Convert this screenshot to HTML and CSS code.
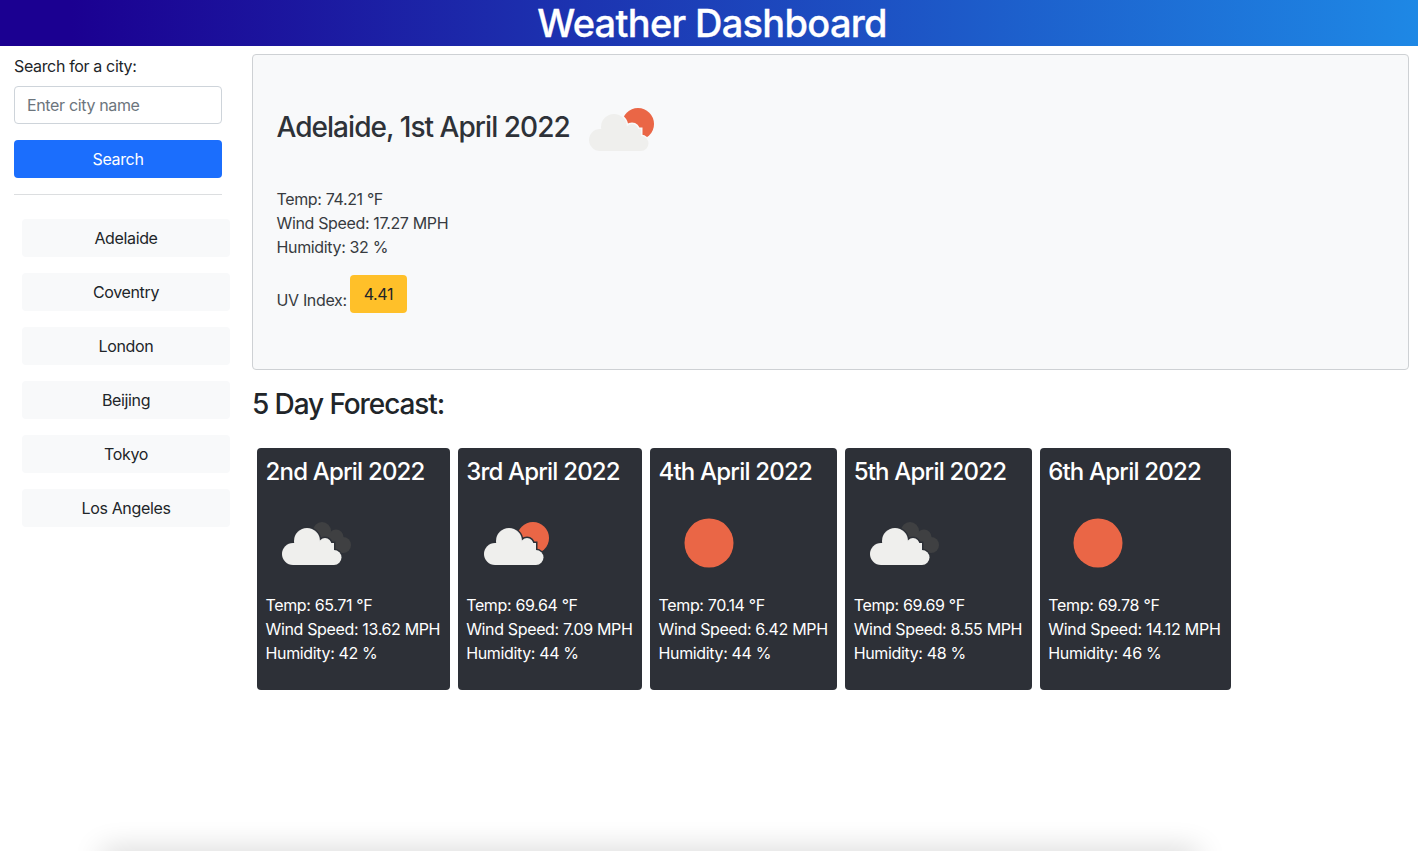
FILE: index.html
```html
<!DOCTYPE html>
<html lang="en">
<head>
<meta charset="utf-8">
<title>Weather Dashboard</title>
<link rel="stylesheet" href="styles.css">
</head>
<body>
<svg class="defs" width="0" height="0" aria-hidden="true">
  <defs>
    <g id="cloud-shape">
      <circle cx="27" cy="61" r="11"/>
      <circle cx="41" cy="48" r="13"/>
      <circle cx="59" cy="51.5" r="6.5"/>
      <circle cx="68" cy="64.5" r="7.5"/>
      <rect x="27" y="50" width="41" height="22"/>
    </g>
    <symbol id="icon-clear" viewBox="0 0 100 100">
      <circle class="sun" cx="50" cy="50" r="24.5"/>
    </symbol>
    <symbol id="icon-few" viewBox="0 0 100 100">
      <circle class="sun" cx="67" cy="45" r="16"/>
      <g class="halo" transform="translate(2 0)"><use href="#cloud-shape"/></g>
      <g class="cloud" transform="translate(2 0)"><use href="#cloud-shape"/></g>
    </symbol>
    <symbol id="icon-broken" viewBox="0 0 100 100">
      <g class="dark">
        <circle cx="56" cy="38" r="9"/>
        <circle cx="70" cy="44" r="7.5"/>
        <circle cx="77" cy="52" r="8"/>
        <rect x="56" y="40" width="20" height="20"/>
      </g>
      <g class="halo"><use href="#cloud-shape"/></g>
      <g class="cloud"><use href="#cloud-shape"/></g>
    </symbol>
  </defs>
</svg>

<header class="top">
  <h1>Weather Dashboard</h1>
</header>

<div class="layout">
  <aside class="side">
    <label class="label" for="city">Search for a city:</label>
    <input class="input" id="city" type="text" placeholder="Enter city name">
    <button class="search" type="button">Search</button>
    <hr class="rule">
    <div class="history">
      <button class="city" type="button">Adelaide</button>
      <button class="city" type="button">Coventry</button>
      <button class="city" type="button">London</button>
      <button class="city" type="button">Beijing</button>
      <button class="city" type="button">Tokyo</button>
      <button class="city" type="button">Los Angeles</button>
    </div>
  </aside>

  <main class="main">
    <section class="today">
      <div class="today-head">
        <h2 class="today-title">Adelaide, 1st April 2022</h2>
        <svg class="icon"><use href="#icon-few"/></svg>
      </div>
      <p class="stats">Temp: 74.21 °F<br>Wind Speed: 17.27 MPH<br>Humidity: 32 %</p>
      <p class="uv"><span class="uv-label">UV Index:</span><span class="uv-badge">4.41</span></p>
    </section>

    <h2 class="forecast-title">5 Day Forecast:</h2>

    <div class="cards">
      <article class="card">
        <h3 class="card-title">2nd April 2022</h3>
        <svg class="icon"><use href="#icon-broken"/></svg>
        <p class="stats">Temp: 65.71 °F<br>Wind Speed: 13.62 MPH<br>Humidity: 42 %</p>
      </article>
      <article class="card">
        <h3 class="card-title">3rd April 2022</h3>
        <svg class="icon"><use href="#icon-few"/></svg>
        <p class="stats">Temp: 69.64 °F<br>Wind Speed: 7.09 MPH<br>Humidity: 44 %</p>
      </article>
      <article class="card">
        <h3 class="card-title">4th April 2022</h3>
        <svg class="icon"><use href="#icon-clear"/></svg>
        <p class="stats">Temp: 70.14 °F<br>Wind Speed: 6.42 MPH<br>Humidity: 44 %</p>
      </article>
      <article class="card">
        <h3 class="card-title">5th April 2022</h3>
        <svg class="icon"><use href="#icon-broken"/></svg>
        <p class="stats">Temp: 69.69 °F<br>Wind Speed: 8.55 MPH<br>Humidity: 48 %</p>
      </article>
      <article class="card">
        <h3 class="card-title">6th April 2022</h3>
        <svg class="icon"><use href="#icon-clear"/></svg>
        <p class="stats">Temp: 69.78 °F<br>Wind Speed: 14.12 MPH<br>Humidity: 46 %</p>
      </article>
    </div>
  </main>
</div>

<div class="edge-shadow"></div>
</body>
</html>
```

FILE: styles.css
```css
* { box-sizing: border-box; }

html, body { height: 100%; }

body {
  margin: 0;
  overflow: hidden;
  background: #fff;
  color: #212529;
  font-family: Inter, "Liberation Sans", sans-serif;
  font-size: 16px;
  line-height: 24px;
  letter-spacing: -0.35px;
}

.defs { position: absolute; }

.top {
  height: 46px;
  background: linear-gradient(90deg, #1b0091 5%, #1e88e5 100%);
  text-align: center;
  color: #fff;
  padding-left: 6px;
}

.top h1 {
  margin: 0;
  font-size: 38px;
  line-height: 46px;
  font-weight: 500;
  letter-spacing: -0.7px;
  -webkit-text-stroke: 0.3px #fff;
}

.layout {
  display: flex;
  align-items: flex-start;
}

.side {
  flex: 0 0 252px;
  padding: 8px 0 0 14px;
  display: flex;
  flex-direction: column;
}

.label { display: block; margin-bottom: 8px; }

.input {
  display: block;
  width: 208px;
  height: 38px;
  padding: 6px 12px;
  border: 1px solid #ced4da;
  border-radius: 4px;
  background: #fff;
  font: inherit;
  letter-spacing: inherit;
  color: #212529;
}

.input::placeholder { color: #6c757d; opacity: 1; }

.search {
  width: 208px;
  height: 38px;
  margin-top: 16px;
  border: 0;
  border-radius: 4px;
  background: #1b6efd;
  color: #fff;
  font: inherit;
  letter-spacing: inherit;
}

.rule {
  width: 208px;
  margin: 16px 0 0;
  border: 0;
  border-top: 1px solid #dcdee0;
}

.history {
  display: flex;
  flex-direction: column;
  gap: 16px;
  margin: 24px 0 0 8px;
}

.city {
  width: 208px;
  height: 38px;
  border: 0;
  border-radius: 4px;
  background: #f8f9fa;
  color: #212529;
  font: inherit;
  letter-spacing: inherit;
}

.main {
  flex: 1;
  min-width: 0;
  padding: 8px 9px 0 0;
}

.today {
  height: 316px;
  padding: 24px 24px 24px 23.5px;
  background: #f8f9fa;
  border: 1px solid #ced1d4;
  border-radius: 4px;
  color: #373b40;
}

.today-head {
  display: flex;
  align-items: center;
  margin-bottom: 8px;
}

.today-title {
  margin: 0 1.5px 4px 0;
  font-size: 28px;
  line-height: 34px;
  font-weight: 500;
  letter-spacing: -0.96px;
  color: #2e3238;
}

.icon {
  display: block;
  width: 100px;
  height: 100px;
  flex: none;
}

.today .icon { color: #f8f9fa; }
.card .icon { color: #2d3037; }

.sun { fill: #ea6646; }
.dark { fill: #3f4042; }
.cloud { fill: #efefed; }
.halo { fill: currentColor; stroke: currentColor; stroke-width: 3; }

.stats { margin: 0 0 16px; }

.uv {
  display: flex;
  align-items: flex-end;
  gap: 3.5px;
  margin: 0;
}

.uv-label { margin-bottom: 1px; }

.uv-badge {
  height: 38px;
  padding: 7px 13.5px;
  border-radius: 4px;
  background: #ffc029;
  color: #212529;
}

.forecast-title {
  margin: 17px 0 27px;
  font-size: 28px;
  line-height: 34px;
  font-weight: 500;
  letter-spacing: -1.1px;
  color: #212529;
}

.cards {
  display: flex;
  gap: 8px;
  padding-left: 5px;
}

.card {
  padding: 9px 9.5px 0 8.5px;
  height: 242px;
  background: #2d3037;
  border-radius: 4px;
  color: #fff;
}

.card:last-child { min-width: 191px; }
.card:last-child .stats { letter-spacing: -0.26px; }

.card-title {
  margin: 1px 0 7px;
  font-size: 24px;
  line-height: 28px;
  font-weight: 500;
  letter-spacing: -0.8px;
}

.edge-shadow {
  position: fixed;
  left: 102px;
  right: 220px;
  bottom: -20px;
  height: 20px;
  box-shadow: 0 0 30px rgba(0, 0, 0, 0.2);
}
```
